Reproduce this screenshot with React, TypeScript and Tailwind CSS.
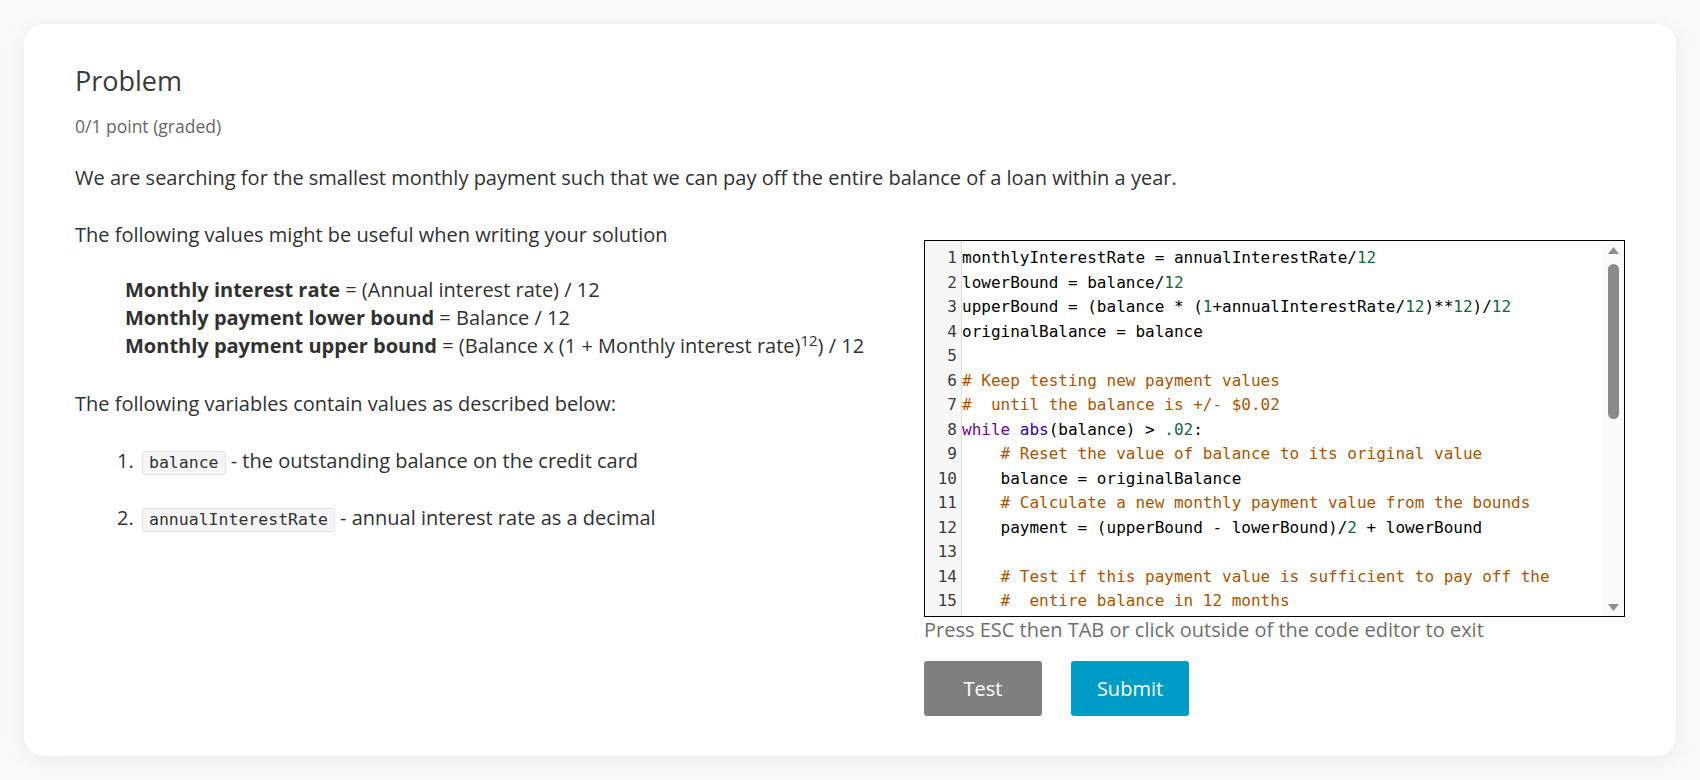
type Tok = { t: string; c?: "num" | "com" | "kw" | "bi" };

const tone: Record<string, string> = {
  num: "text-[#116644]",
  com: "text-[#aa5500]",
  kw: "text-[#770088]",
  bi: "text-[#3300aa]",
};

const code: Tok[][] = [
  [{ t: "monthlyInterestRate = annualInterestRate/" }, { t: "12", c: "num" }],
  [{ t: "lowerBound = balance/" }, { t: "12", c: "num" }],
  [
    { t: "upperBound = (balance * (" },
    { t: "1", c: "num" },
    { t: "+annualInterestRate/" },
    { t: "12", c: "num" },
    { t: ")**" },
    { t: "12", c: "num" },
    { t: ")/" },
    { t: "12", c: "num" },
  ],
  [{ t: "originalBalance = balance" }],
  [],
  [{ t: "# Keep testing new payment values", c: "com" }],
  [{ t: "#  until the balance is +/- $0.02", c: "com" }],
  [
    { t: "while", c: "kw" },
    { t: " " },
    { t: "abs", c: "bi" },
    { t: "(balance) > " },
    { t: ".02", c: "num" },
    { t: ":" },
  ],
  [{ t: "    " }, { t: "# Reset the value of balance to its original value", c: "com" }],
  [{ t: "    balance = originalBalance" }],
  [{ t: "    " }, { t: "# Calculate a new monthly payment value from the bounds", c: "com" }],
  [
    { t: "    payment = (upperBound - lowerBound)/" },
    { t: "2", c: "num" },
    { t: " + lowerBound" },
  ],
  [],
  [{ t: "    " }, { t: "# Test if this payment value is sufficient to pay off the", c: "com" }],
  [{ t: "    " }, { t: "#  entire balance in 12 months", c: "com" }],
];

function Chip({ children }: { children: string }) {
  return (
    <code className="inline-block rounded-[3px] border border-[#e3e3e3] bg-[#f5f5f5] px-[6px] align-baseline font-['DejaVu_Sans_Mono',monospace] text-[16.5px] leading-[22px] text-[#313131]">
      {children}
    </code>
  );
}

function Editor() {
  return (
    <div className="flex h-[377px] overflow-hidden border border-black bg-white font-['DejaVu_Sans_Mono',monospace] text-[16px] leading-[24.5px]">
      {/* gutter */}
      <div className="w-[37px] flex-none border-r border-[#dddddd] bg-[#f7f7f7] pt-[5px] pr-[4px] text-right text-[#3c3c3c]">
        {code.map((_, i) => (
          <div key={i}>{i + 1}</div>
        ))}
      </div>

      {/* code */}
      <div className="min-w-0 flex-1 pt-[5px] text-black">
        {code.map((line, i) => (
          <div key={i} className="h-[24.5px] whitespace-pre">
            {line.map((tok, j) => (
              <span key={j} className={tok.c ? tone[tok.c] : ""}>
                {tok.t}
              </span>
            ))}
          </div>
        ))}
      </div>

      {/* scrollbar */}
      <div className="flex w-[21px] flex-none flex-col items-center bg-[#fafafa] pt-[6px] pb-[5px]">
        <svg width="11" height="7" viewBox="0 0 11 7">
          <polygon points="5.5,0 11,7 0,7" fill="#8e8e8e" />
        </svg>
        <div className="mt-[10px] h-[155px] w-[11px] rounded-full bg-[#8a8a8a]" />
        <div className="flex-1" />
        <svg width="11" height="7" viewBox="0 0 11 7">
          <polygon points="0,0 11,0 5.5,7" fill="#8e8e8e" />
        </svg>
      </div>
    </div>
  );
}

export default function App() {
  return (
    <div className="min-h-screen bg-[#fafafa] p-[24px] font-['Open_Sans',sans-serif]">
      <div className="rounded-[20px] bg-white px-[51px] pt-[41px] pb-[40px] shadow-[0_4px_24px_rgba(0,0,0,0.07)]">
        <h2 className="text-[27px] leading-[32px] font-normal text-[#3a3a3a]">
          Problem
        </h2>
        <p className="mt-[17px] text-[17.5px] leading-[24px] text-[#666666]">
          0/1 point (graded)
        </p>

        <p className="mt-[26px] text-[20px] leading-[28px] text-[#313131]">
          We are searching for the smallest monthly payment such that we can
          pay off the entire balance of a loan within a year.
        </p>

        <div className="mt-[29px] flex">
          {/* description */}
          <div className="w-[849px] flex-none text-[20px] leading-[28px] text-[#313131]">
            <p>The following values might be useful when writing your solution</p>

            <div className="mt-[27px] pl-[50px]">
              <div>
                <b className="font-bold">Monthly interest rate</b> = (Annual
                interest rate) / 12
              </div>
              <div>
                <b className="font-bold">Monthly payment lower bound</b> =
                Balance / 12
              </div>
              <div>
                <b className="font-bold">Monthly payment upper bound</b> =
                (Balance x (1 + Monthly interest rate)<sup>12</sup>) / 12
              </div>
            </div>

            <p className="mt-[30px]">
              The following variables contain values as described below:
            </p>

            <div className="mt-[29px] pl-[42px]">
              <span className="inline-block w-[25px]">1.</span>
              <Chip>balance</Chip> - the outstanding balance on the credit card
            </div>
            <div className="mt-[29px] pl-[42px]">
              <span className="inline-block w-[25px]">2.</span>
              <Chip>annualInterestRate</Chip> - annual interest rate as a
              decimal
            </div>
          </div>

          {/* editor */}
          <div className="w-[701px] flex-none pt-[19px]">
            <Editor />
            <p className="text-[20px] leading-[26px] text-[#6e6e6e]">
              Press ESC then TAB or click outside of the code editor to exit
            </p>
            <div className="mt-[18px] flex gap-[29px]">
              <button className="h-[55px] w-[118px] rounded-[3px] bg-[#7f7f7f] text-[20px] text-white">
                Test
              </button>
              <button className="h-[55px] w-[118px] rounded-[3px] bg-[#009cc8] text-[20px] text-white">
                Submit
              </button>
            </div>
          </div>
        </div>
      </div>
    </div>
  );
}
